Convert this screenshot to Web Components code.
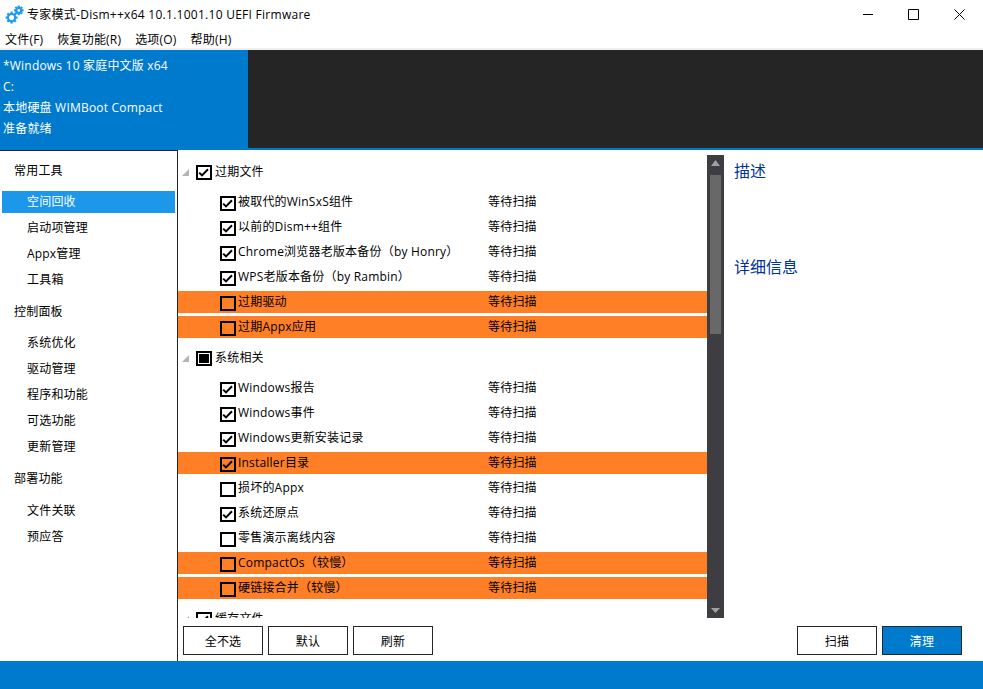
<!DOCTYPE html>
<html lang="zh-CN">
<head>
<meta charset="utf-8">
<title>Dism++</title>
<style>
  html, body { margin: 0; height: 689px; overflow: hidden; background: #fff; }
  body {
    display: flex;
    flex-direction: column;
    font: 12px "Open Sans", "Noto Sans CJK SC", sans-serif;
    letter-spacing: .2px;
    color: #000;
  }
</style>
</head>
<body>
  <title-bar>专家模式-Dism++x64 10.1.1001.10 UEFI Firmware</title-bar>
  <menu-bar>
    <span>文件(F)</span><span>恢复功能(R)</span><span>选项(O)</span><span>帮助(H)</span>
  </menu-bar>
  <info-header>
    <div>*Windows 10 家庭中文版 x64</div>
    <div>C:</div>
    <div>本地硬盘 WIMBoot Compact</div>
    <div>准备就绪</div>
  </info-header>
  <main-area>
    <side-nav slot="nav">
      <nav-head>常用工具</nav-head>
      <nav-item selected>空间回收</nav-item>
      <nav-item>启动项管理</nav-item>
      <nav-item>Appx管理</nav-item>
      <nav-item>工具箱</nav-item>
      <nav-head>控制面板</nav-head>
      <nav-item>系统优化</nav-item>
      <nav-item>驱动管理</nav-item>
      <nav-item>程序和功能</nav-item>
      <nav-item>可选功能</nav-item>
      <nav-item>更新管理</nav-item>
      <nav-head>部署功能</nav-head>
      <nav-item>文件关联</nav-item>
      <nav-item>预应答</nav-item>
    </side-nav>
    <clean-list slot="list">
      <clean-group state="checked">过期文件</clean-group>
      <clean-item checked>被取代的WinSxS组件</clean-item>
      <clean-item checked>以前的Dism++组件</clean-item>
      <clean-item checked>Chrome浏览器老版本备份（by Honry）</clean-item>
      <clean-item checked>WPS老版本备份（by Rambin）</clean-item>
      <clean-item warn>过期驱动</clean-item>
      <clean-item warn>过期Appx应用</clean-item>
      <clean-group state="mixed">系统相关</clean-group>
      <clean-item checked>Windows报告</clean-item>
      <clean-item checked>Windows事件</clean-item>
      <clean-item checked>Windows更新安装记录</clean-item>
      <clean-item checked warn>Installer目录</clean-item>
      <clean-item>损坏的Appx</clean-item>
      <clean-item checked>系统还原点</clean-item>
      <clean-item>零售演示离线内容</clean-item>
      <clean-item warn>CompactOs（较慢）</clean-item>
      <clean-item warn>硬链接合并（较慢）</clean-item>
      <clean-group state="checked">缓存文件</clean-group>
    </clean-list>
    <dark-scrollbar slot="scroll"></dark-scrollbar>
    <desc-pane slot="desc"></desc-pane>
    <push-button slot="left">全不选</push-button>
    <push-button slot="left">默认</push-button>
    <push-button slot="left">刷新</push-button>
    <push-button slot="right">扫描</push-button>
    <push-button slot="right" primary>清理</push-button>
  </main-area>
  <status-bar></status-bar>

<script>
const BORDER = '#262626';

class TitleBar extends HTMLElement {
  constructor() {
    super();
    this.attachShadow({ mode: 'open' });
  }
  connectedCallback() {
    // two gears, big one lower left
    const gear = (cx, cy, r) => {
      let teeth = '';
      for (let a = 0; a < 360; a += 45) {
        teeth += `<rect x="${cx - 1.1}" y="${cy - r - 1.4}" width="2.2" height="2.6" transform="rotate(${a} ${cx} ${cy})"/>`;
      }
      return `${teeth}<circle cx="${cx}" cy="${cy}" r="${r - 1}" fill="none" stroke="#1e9be8" stroke-width="2.1"/>`;
    };
    this.shadowRoot.innerHTML = `
      <style>
        :host { display: flex; align-items: center; gap: 1px; height: 28px; flex: none; }
        svg.logo { margin: 0 2px 0 5px; flex: none; }
        .text { flex: 1; white-space: nowrap; letter-spacing: .27px; }
        .btn { width: 45px; height: 28px; box-sizing: border-box; padding-top: 9px; display: flex; justify-content: center; }
        .btn svg { display: block; }
        .btn:last-child { margin-right: 1px; }
      </style>
      <svg class="logo" width="19" height="22" viewBox="0 0 19 22" fill="#1e9be8">
        ${gear(6.6, 14.6, 4.6)}${gear(13.8, 7.4, 3.4)}
      </svg>
      <span class="text"><slot></slot></span>
      <span class="btn"><svg width="11" height="11" viewBox="0 0 11 11"><path d="M1 5.5h10" stroke="#000" fill="none"/></svg></span>
      <span class="btn"><svg width="11" height="11" viewBox="0 0 11 11"><path d="M.5.5h10v10H.5z" stroke="#000" fill="none"/></svg></span>
      <span class="btn"><svg width="11" height="11" viewBox="0 0 11 11"><path d="M.5.5l10 10M10.5.5l-10 10" stroke="#000" fill="none"/></svg></span>
    `;
  }
}

class MenuBar extends HTMLElement {
  constructor() {
    super();
    this.attachShadow({ mode: 'open' });
  }
  connectedCallback() {
    this.shadowRoot.innerHTML = `
      <style>
        :host { display: flex; gap: 14px; align-items: center; height: 19px; padding: 1px 0 0 5px; flex: none;
                border-bottom: 2px solid #f0f0f0; }
      </style>
      <slot></slot>
    `;
  }
}

class InfoHeader extends HTMLElement {
  constructor() {
    super();
    this.attachShadow({ mode: 'open' });
  }
  connectedCallback() {
    this.shadowRoot.innerHTML = `
      <style>
        :host { display: flex; height: 100px; flex: none; background: #007acc; color: #fff; }
        .info { width: 245px; padding: 5px 0 0 3px; line-height: 21px; }
        .dark { flex: 1; height: 98px; background: #252526; }
      </style>
      <div class="info"><slot></slot></div>
      <div class="dark"></div>
    `;
  }
}

class MainArea extends HTMLElement {
  constructor() {
    super();
    this.attachShadow({ mode: 'open' });
  }
  connectedCallback() {
    this.shadowRoot.innerHTML = `
      <style>
        :host { display: flex; flex: 1; min-height: 0; }
        .content { flex: 1; display: flex; flex-direction: column; min-width: 0; }
        .top { display: flex; height: 463px; margin-top: 5px; }
        .bottom { display: flex; justify-content: space-between; padding: 8px 21px 0 5px; }
        .group { display: flex; gap: 5px; }
      </style>
      <slot name="nav"></slot>
      <div class="content">
        <div class="top">
          <slot name="list"></slot>
          <slot name="scroll"></slot>
          <slot name="desc"></slot>
        </div>
        <div class="bottom">
          <div class="group"><slot name="left"></slot></div>
          <div class="group"><slot name="right"></slot></div>
        </div>
      </div>
    `;
  }
}

class SideNav extends HTMLElement {
  constructor() {
    super();
    this.attachShadow({ mode: 'open' });
  }
  connectedCallback() {
    this.shadowRoot.innerHTML = `
      <style>
        :host { display: block; width: 177px; flex: none; padding-top: 10px;
                border-top: 1px solid ${BORDER}; border-right: 1px solid ${BORDER}; }
      </style>
      <slot></slot>
    `;
  }
}

class NavHead extends HTMLElement {
  constructor() {
    super();
    this.attachShadow({ mode: 'open' });
  }
  connectedCallback() {
    this.shadowRoot.innerHTML = `
      <style>
        :host { display: block; height: 20px; line-height: 20px; padding-left: 14px; margin-bottom: 10px; }
        :host(:not(:first-child)) { margin-top: 11px; }
        :host(:nth-of-type(3)) { margin-bottom: 11px; }
      </style>
      <slot></slot>
    `;
  }
}

class NavItem extends HTMLElement {
  constructor() {
    super();
    this.attachShadow({ mode: 'open' });
  }
  connectedCallback() {
    this.shadowRoot.innerHTML = `
      <style>
        :host { display: block; height: 22px; line-height: 21px; margin: 0 2px 4px; padding-left: 25px; }
        :host([selected]) { background: #1c97ea; color: #fff; }
      </style>
      <slot></slot>
    `;
  }
}

class CleanList extends HTMLElement {
  constructor() {
    super();
    this.attachShadow({ mode: 'open' });
  }
  connectedCallback() {
    this.shadowRoot.innerHTML = `
      <style>
        :host { display: block; flex: 1; overflow: hidden; min-width: 0; }
      </style>
      <slot></slot>
    `;
  }
}

class CheckBox extends HTMLElement {
  constructor() {
    super();
    this.attachShadow({ mode: 'open' });
  }
  connectedCallback() {
    const state = this.getAttribute('state');
    let mark = '';
    if (state === 'checked') mark = '<path d="M3.2 7.6L6 10.4L12 4.2" fill="none" stroke="#000" stroke-width="2"/>';
    if (state === 'mixed') mark = '<rect x="3" y="3" width="10" height="9"/>';
    this.shadowRoot.innerHTML = `
      <style>
        :host { display: block; width: 16px; height: 15px; flex: none; }
        svg { display: block; }
      </style>
      <svg width="16" height="15" viewBox="0 0 16 15">
        <rect x="1" y="1" width="14" height="13" fill="none" stroke="#000" stroke-width="2"/>
        ${mark}
      </svg>
    `;
  }
}

class CleanGroup extends HTMLElement {
  constructor() {
    super();
    this.attachShadow({ mode: 'open' });
  }
  connectedCallback() {
    const state = this.getAttribute('state') || '';
    this.shadowRoot.innerHTML = `
      <style>
        /* margins collapse with the 3px under the rows above */
        :host { display: flex; align-items: center; height: 20px; margin: 9px 0 10px; padding-left: 4px; white-space: nowrap; }
        :host(:first-child) { margin-top: 6px; }
        svg { margin: 3px 7px 0 0; }
        check-box { margin: 3px 3px 0 0; }
      </style>
      <svg width="7" height="7" viewBox="0 0 7 7"><path d="M7 0v7H0z" fill="#b4b4b4"/></svg>
      <check-box state="${state}"></check-box>
      <span><slot></slot></span>
    `;
  }
}

class CleanItem extends HTMLElement {
  constructor() {
    super();
    this.attachShadow({ mode: 'open' });
  }
  connectedCallback() {
    const state = this.hasAttribute('checked') ? 'checked' : '';
    this.shadowRoot.innerHTML = `
      <style>
        :host { display: flex; align-items: center; height: 22px; margin-bottom: 3px; padding-left: 42px; white-space: nowrap; }
        :host([warn]) { background: #ff7f27; }
        check-box { margin: 3px 2px 0 0; }
        span { padding-bottom: 2px; }
        .name { width: 250px; }
      </style>
      <check-box state="${state}"></check-box>
      <span class="name"><slot></slot></span>
      <span>等待扫描</span>
    `;
  }
}

class DarkScrollbar extends HTMLElement {
  constructor() {
    super();
    this.attachShadow({ mode: 'open' });
  }
  connectedCallback() {
    this.shadowRoot.innerHTML = `
      <style>
        :host { display: flex; flex-direction: column; align-items: center; width: 17px; flex: none; background: #3e3e42; }
        .arrow { height: 20px; box-sizing: border-box; flex: none; }
        .arrow svg { display: block; }
        .up { padding-top: 5px; }
        .down { padding-top: 10px; }
        .thumb { width: 11px; height: 159px; background: #686868; flex: none; }
        .space { flex: 1; }
      </style>
      <div class="arrow up"><svg width="9" height="6" viewBox="0 0 9 6"><path d="M4.5 0L9 6H0z" fill="#a0a0a0"/></svg></div>
      <div class="thumb"></div>
      <div class="space"></div>
      <div class="arrow down"><svg width="9" height="5" viewBox="0 0 9 5"><path d="M0 0h9L4.5 5z" fill="#a0a0a0"/></svg></div>
    `;
  }
}

class DescPane extends HTMLElement {
  constructor() {
    super();
    this.attachShadow({ mode: 'open' });
  }
  connectedCallback() {
    this.shadowRoot.innerHTML = `
      <style>
        :host { display: block; width: 249px; flex: none; padding: 5px 0 0 10px; font-size: 16px; letter-spacing: 0; color: #003399; }
        div { height: 22px; line-height: 22px; }
        div + div { margin-top: 74px; }
      </style>
      <div>描述</div>
      <div>详细信息</div>
    `;
  }
}

class PushButton extends HTMLElement {
  constructor() {
    super();
    this.attachShadow({ mode: 'open' });
  }
  connectedCallback() {
    this.shadowRoot.innerHTML = `
      <style>
        :host { display: flex; align-items: center; justify-content: center; box-sizing: border-box;
                width: 80px; height: 29px; border: 1px solid ${BORDER}; background: #fff; }
        :host([primary]) { background: #007acc; color: #fff; }
      </style>
      <slot></slot>
    `;
  }
}

class StatusBar extends HTMLElement {
  constructor() {
    super();
    this.attachShadow({ mode: 'open' });
  }
  connectedCallback() {
    this.shadowRoot.innerHTML = `
      <style>
        :host { display: block; height: 28px; flex: none; background: #007acc; }
      </style>
    `;
  }
}

customElements.define('title-bar', TitleBar);
customElements.define('menu-bar', MenuBar);
customElements.define('info-header', InfoHeader);
customElements.define('main-area', MainArea);
customElements.define('side-nav', SideNav);
customElements.define('nav-head', NavHead);
customElements.define('nav-item', NavItem);
customElements.define('clean-list', CleanList);
customElements.define('check-box', CheckBox);
customElements.define('clean-group', CleanGroup);
customElements.define('clean-item', CleanItem);
customElements.define('dark-scrollbar', DarkScrollbar);
customElements.define('desc-pane', DescPane);
customElements.define('push-button', PushButton);
customElements.define('status-bar', StatusBar);
</script>
</body>
</html>
